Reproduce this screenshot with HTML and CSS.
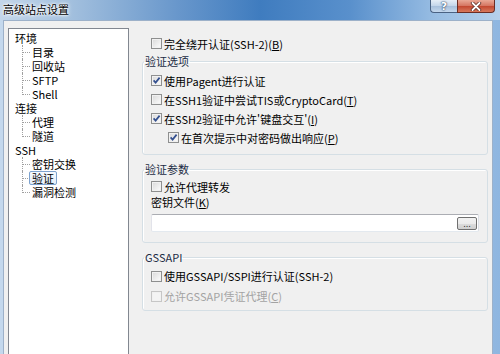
FILE: index.html
```html
<!DOCTYPE html>
<html lang="zh-CN">

<head>
    <meta charset="UTF-8" />
    <title>高级站点设置</title>
    <link rel="stylesheet" href="styles.css">
</head>

<body>
    <div class="window">

        <!-- 标题栏 -->
        <div class="titlebar">
            <span class="title">高级站点设置</span>
            <div class="caption-buttons">
                <span class="cap-btn help">?</span>
                <span class="cap-btn close">
                    <svg width="12" height="9" viewBox="0 0 12 9">
                        <path d="M2.5 1 L9.5 8 M9.5 1 L2.5 8" stroke="#5a2a22" stroke-width="3.4" stroke-linecap="round" />
                        <path d="M2.5 1 L9.5 8 M9.5 1 L2.5 8" stroke="#fff" stroke-width="1.8" stroke-linecap="round" />
                    </svg>
                </span>
            </div>
        </div>

        <div class="client">
            <!-- 左侧树 -->
            <ul class="tree">
                <li class="node">环境</li>
                <li class="node"><span class="twig"></span>目录</li>
                <li class="node"><span class="twig"></span>回收站</li>
                <li class="node"><span class="twig"></span>SFTP</li>
                <li class="node last"><span class="twig"></span>Shell</li>
                <li class="node">连接</li>
                <li class="node"><span class="twig"></span>代理</li>
                <li class="node last"><span class="twig"></span>隧道</li>
                <li class="node">SSH</li>
                <li class="node"><span class="twig"></span>密钥交换</li>
                <li class="node"><span class="twig"></span><span class="sel">验证</span></li>
                <li class="node last"><span class="twig"></span>漏洞检测</li>
            </ul>

            <!-- 右侧设置 -->
            <div class="panel">
                <label class="check top"><span class="box"></span>完全绕开认证(SSH-2)(<u>B</u>)</label>

                <fieldset class="group opts">
                    <legend>验证选项</legend>
                    <label class="check"><span class="box on"><svg width="9" height="9" viewBox="0 0 9 9"><path d="M1.6 4.4 L3.6 6.6 L7.6 1.6" /></svg></span>使用Pagent进行认证</label>
                    <label class="check"><span class="box"></span>在SSH1验证中尝试TIS或CryptoCard(<u>T</u>)</label>
                    <label class="check"><span class="box on"><svg width="9" height="9" viewBox="0 0 9 9"><path d="M1.6 4.4 L3.6 6.6 L7.6 1.6" /></svg></span>在SSH2验证中允许'键盘交互'(<u>I</u>)</label>
                    <label class="check sub"><span class="box on"><svg width="9" height="9" viewBox="0 0 9 9"><path d="M1.6 4.4 L3.6 6.6 L7.6 1.6" /></svg></span>在首次提示中对密码做出响应(<u>P</u>)</label>
                </fieldset>

                <fieldset class="group params">
                    <legend>验证参数</legend>
                    <label class="check"><span class="box"></span>允许代理转发</label>
                    <div class="field-label">密钥文件(<u>K</u>)</div>
                    <div class="keyfile">
                        <span class="browse">...</span>
                    </div>
                </fieldset>

                <fieldset class="group gss">
                    <legend>GSSAPI</legend>
                    <label class="check"><span class="box"></span>使用GSSAPI/SSPI进行认证(SSH-2)</label>
                    <label class="check disabled"><span class="box"></span>允许GSSAPI凭证代理(<u>C</u>)</label>
                </fieldset>
            </div>
        </div>

    </div>
</body>

</html>
```

FILE: styles.css
```css
* {
    box-sizing: border-box;
}

body {
    margin: 0;
    width: 500px;
    height: 354px;
    overflow: hidden;
    font-family: "Noto Sans CJK SC", "Noto Sans", sans-serif;
    font-size: 11px;
    color: #000;
}

.window {
    height: 100%;
    display: flex;
    flex-direction: column;
    background: linear-gradient(90deg, #c4d8ed 0%, #b6cfe9 60%, #8fb6e0 100%);
}

/* Title bar */
.titlebar {
    flex: none;
    height: 20px;
    display: flex;
    align-items: flex-start;
    background: linear-gradient(90deg, #c3d6ea 0%, #a3c0de 14%, #6796cb 36%, #3f7cbf 52%, #5990cc 70%, #98bde3 87%, #b6d0eb 100%);
}

.title {
    padding: 2px 0 0 3px;
    line-height: 15px;
    text-shadow: 0 0 5px #fff, 0 0 3px #fff, 0 0 2px #fff;
}

.caption-buttons {
    margin-left: auto;
    margin-right: 5px;
    display: flex;
}

.cap-btn {
    height: 13px;
    display: flex;
    align-items: center;
    justify-content: center;
    border: 1px solid #4a6283;
    border-top: none;
}

.cap-btn.help {
    width: 27px;
    border-right: none;
    border-radius: 0 0 0 4px;
    background: linear-gradient(#e6eef7, #c3d5ea 50%, #a7bfdb 51%, #c4d8ee);
    color: #fff;
    font-family: "DejaVu Sans", sans-serif;
    font-weight: bold;
    font-size: 11px;
    line-height: 11px;
    text-shadow: 0 0 2px #1f3a5c, 0 0 1px #1f3a5c;
}

.cap-btn.close {
    width: 38px;
    border-radius: 0 0 4px 0;
    border-color: #6b2d25;
    background: linear-gradient(#e9a896, #d4735f 50%, #c2462f 51%, #d8785c);
}

/* Client area */
.client {
    flex: 1;
    margin: 0 7px 0 3px;
    padding: 7px 0 0 4px;
    background: #f0f0f0;
    border: 1px solid #9db1c9;
    border-bottom: none;
    display: flex;
    align-items: flex-start;
}

.tree {
    flex: none;
    width: 121px;
    height: 340px;
    margin: 0;
    padding: 2px 0 0 6px;
    list-style: none;
    background: #fff;
    border: 1px solid #828790;
}

.node {
    display: flex;
    align-items: flex-start;
    height: 14px;
    line-height: 14px;
    white-space: nowrap;
}

.twig {
    flex: none;
    width: 8px;
    height: 14px;
    margin: 0 2px 0 7px;
    border-left: 1px dotted #a0a0a0;
}

.twig::before {
    content: "";
    display: block;
    height: 7px;
    border-bottom: 1px dotted #a0a0a0;
}

.last .twig {
    height: 8px;
}

.sel {
    line-height: 12px;
    padding: 0 2px;
    margin-left: -3px;
    border: 1px solid #7da2ce;
    border-radius: 2px;
    background: linear-gradient(#f6fafe, #e3eef9);
}

/* Right panel */
.panel {
    flex: none;
    width: 346px;
    margin-left: 13px;
    padding-top: 6px;
}

.check {
    display: flex;
    align-items: center;
    height: 19px;
    white-space: nowrap;
}

.check.top {
    padding-left: 9px;
}

.check.sub {
    padding-left: 17px;
}

.box {
    flex: none;
    width: 11px;
    height: 11px;
    margin-right: 2px;
    border: 1px solid #8e8f8f;
    background: linear-gradient(135deg, #d8d8d8, #f6f6f6 80%);
    box-shadow: inset 0 0 0 1px #f1f1f1;
    display: flex;
    align-items: center;
    justify-content: center;
}

.box svg path {
    fill: none;
    stroke: #34508f;
    stroke-width: 1.7;
}

.disabled {
    color: #a3a3a3;
}

.disabled .box {
    border-color: #c6c6c6;
    background: #f4f4f4;
}

.group {
    margin: 7px 0 0;
    min-inline-size: 0;
    padding: 3px 8px 7px;
    border: 1px solid #d5dfe5;
    border-radius: 3px;
    box-shadow: inset 1px 1px 0 #fff;
}

.group.opts {
    margin-top: 1px;
}

.group legend {
    padding: 0 1px;
    margin-left: -7px;
    line-height: 14px;
    color: #1c2c44;
}

.group.params {
    padding: 1px 8px 10px;
}

.field-label {
    line-height: 13px;
}

.keyfile {
    height: 18px;
    margin-top: 5px;
    padding: 2px 1px 0 0;
    display: flex;
    justify-content: flex-end;
    background: #fff;
    border: 1px solid;
    border-color: #abadb3 #dbdfe6 #e3e9ef #e2e3ea;
    border-radius: 2px;
}

.browse {
    width: 20px;
    height: 13px;
    border: 1px solid #707070;
    border-radius: 2px;
    background: linear-gradient(#f2f2f2, #ebebeb 50%, #dddddd 51%, #cfcfcf);
    font-family: "DejaVu Sans", sans-serif;
    font-size: 8px;
    line-height: 13px;
    text-align: center;
    color: #222;
}

.group.gss {
    padding: 2px 8px 4px;
}

.group.gss .check {
    height: 20px;
}
```
